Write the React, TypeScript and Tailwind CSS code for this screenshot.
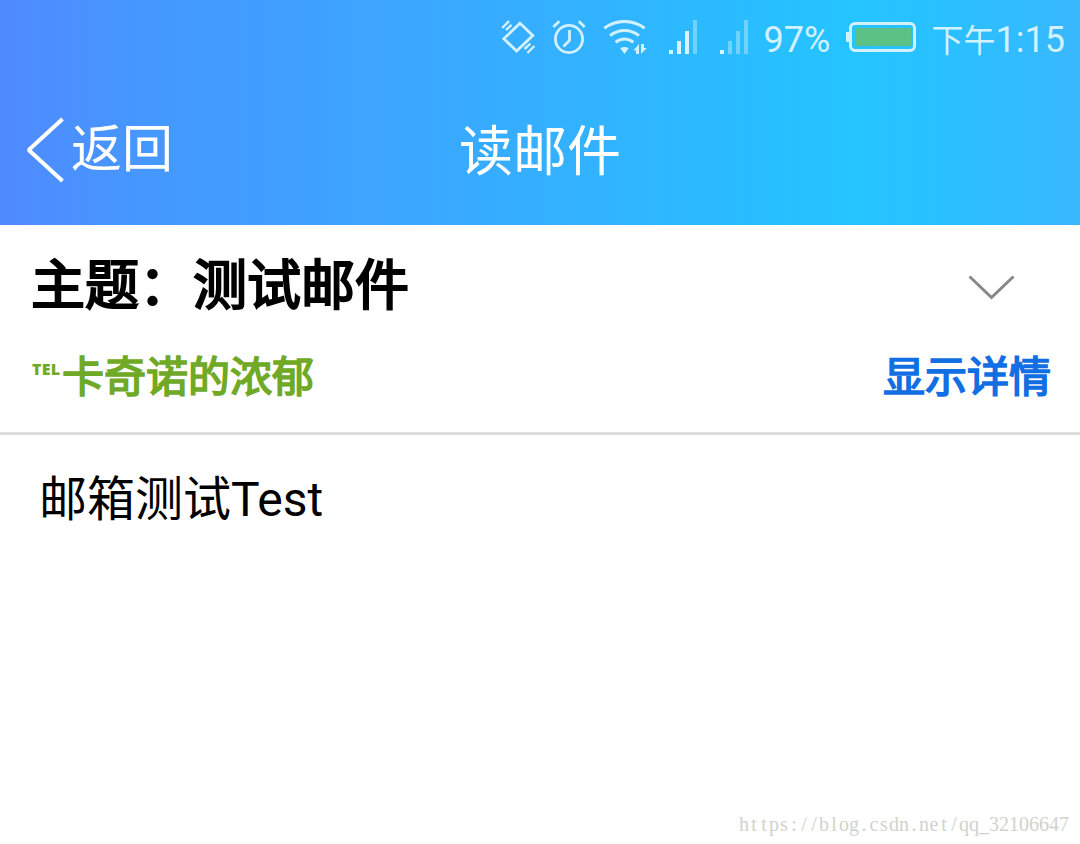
const SIGNAL_HEIGHTS = [4, 13, 23, 34]
const WATERMARK = "https://blog.csdn.net/qq_32106647"

function VibrateIcon() {
  return (
    <svg width="34" height="34" viewBox="0 0 34 34" fill="none" stroke="#d3f0ff" strokeWidth="2.8" className="shrink-0">
      <path d="M19 3.2 31.8 15.4 15.6 31 2.8 18.8Z" />
      <path d="M1.2 8 8 1.2M5 10 10.6 4.8M23.6 29 29.4 23.6M26.4 33 33.4 26" strokeWidth="2.4" />
    </svg>
  )
}

function AlarmIcon() {
  return (
    <svg width="34" height="34" viewBox="0 0 34 34" fill="none" stroke="#d3f0ff" strokeWidth="2.8" className="shrink-0">
      <circle cx="17" cy="19" r="13.6" />
      <path d="M17.5 10v10.5L11.5 26.5" />
      <path d="M1.3 7 7.3 1.3M26.7 1.3 32.7 7" />
    </svg>
  )
}

function WifiIcon() {
  return (
    <svg width="44" height="34" viewBox="0 0 44 34" fill="none" stroke="#d3f0ff" strokeWidth="3" className="shrink-0">
      <path d="M1.3 8.3C13-.8 30-.8 41.7 8.3" />
      <path d="M7 15.6C15.5 8.7 27.5 8.7 36 15.6" />
      <path d="M12.6 22.4C18 18 25 18 30.4 22.4" />
      <path d="M17.3 28.2C19.6 26.7 23.4 26.7 25.7 28.2L21.5 34Z" fill="#d3f0ff" stroke="none" />
      <path d="M36 34V24L30.2 30.4H33V34ZM38 24V34L43.8 28H41V24Z" fill="#d3f0ff" stroke="none" />
    </svg>
  )
}

function SignalIcon({ level }: { level: number }) {
  return (
    <svg width="28" height="34" viewBox="0 0 28 34" className="shrink-0">
      {SIGNAL_HEIGHTS.map((h, i) => (
        <rect key={h} x={i * 8} y={34 - h} width="4" height={h} fill={i < level ? "#d8f3ff" : "#6fd2ff"} />
      ))}
    </svg>
  )
}

function BatteryIcon() {
  return (
    <svg width="70" height="30" viewBox="0 0 70 30" className="shrink-0">
      <rect x="0" y="10" width="4" height="10" fill="#d3f0ff" />
      <rect x="4.5" y="1.5" width="64" height="27" rx="4.5" fill="none" stroke="#d3f0ff" strokeWidth="3" />
      <rect x="10" y="6" width="55" height="18" fill="#5cc184" />
    </svg>
  )
}

function StatusBar() {
  return (
    <div className="flex h-[74px] items-center justify-end pr-[15px] font-['Roboto','Noto_Sans_CJK_SC',sans-serif] text-[#d3f0ff]">
      <VibrateIcon />
      <div className="w-[17px]" />
      <AlarmIcon />
      <div className="w-[17px]" />
      <WifiIcon />
      <div className="w-[22px]" />
      <SignalIcon level={3} />
      <div className="w-[23px]" />
      <SignalIcon level={1} />
      <span className="ml-4 w-[82px] pt-[5px] text-4xl leading-none whitespace-nowrap">97%</span>
      <BatteryIcon />
      <span className="ml-4 flex items-baseline pt-[5px] text-4xl leading-none whitespace-nowrap">
        <span className="text-[32px]">下午</span>
        <span>1:15</span>
      </span>
    </div>
  )
}

export default function App() {
  return (
    <div className="flex h-[844px] w-[1080px] flex-col overflow-hidden bg-white font-['Roboto','Noto_Sans_CJK_SC',sans-serif] text-black">
      <header className="h-[225px] bg-[linear-gradient(90deg,#508aff_0%,#4598ff_14%,#3da4ff_34%,#32b2ff_54%,#24c4ff_79%,#2ac0ff_88%,#39b7ff_100%)] text-white">
        <StatusBar />
        <nav className="grid h-[151px] grid-cols-3 items-center">
          <button className="flex items-center pl-[26px]">
            <svg width="38" height="66" viewBox="0 0 38 66" fill="none" stroke="#fff" strokeWidth="4" strokeLinejoin="bevel">
              <path d="M36.5 2 2.7 33 36.5 64" />
            </svg>
            <span className="ml-[7px] text-[51px] leading-none">返回</span>
          </button>
          <h1 className="pt-[7px] text-center text-[54px] leading-none">读邮件</h1>
        </nav>
      </header>

      <section className="h-[210px] border-b-[3px] border-[#dcdcdc]">
        <div className="flex h-[124px] items-center justify-between pr-[65px] pl-[31px]">
          <h2 className="text-[54px] leading-none [-webkit-text-stroke:2.2px_#000]">主题：测试邮件</h2>
          <svg width="47" height="28" viewBox="0 0 47 28" fill="none" stroke="#888" strokeWidth="3" className="mt-[2px]">
            <path d="M1.5 2.5 23.5 23.5 45.5 2.5" />
          </svg>
        </div>
        <div className="flex h-[58px] items-center justify-between pr-[29px] pl-[31px]">
          <div className="flex items-start text-[#6fa925]">
            <span className="w-[31px] pt-[4px] pl-px font-['Open_Sans',sans-serif] text-[16px] leading-none font-extrabold tracking-[0.2px]">TEL</span>
            <span className="text-[42px] leading-none [-webkit-text-stroke:1.7px_#6fa925]">卡奇诺的浓郁</span>
          </div>
          <a className="text-[42px] leading-none text-[#126fe3] [-webkit-text-stroke:1.7px_#126fe3]">显示详情</a>
        </div>
      </section>

      <main className="flex-1 pt-[41px] pl-[39px]">
        <p className="text-5xl leading-none">邮箱测试Test</p>
      </main>

      <footer className="flex justify-end pr-[11px] pb-[10px] font-['Liberation_Serif',serif] text-[20px] leading-none text-[#d2d2cc]">
        {WATERMARK.split("").map((c, i) => (
          <span key={i} className="w-[10px] text-center">{c}</span>
        ))}
      </footer>
    </div>
  )
}
